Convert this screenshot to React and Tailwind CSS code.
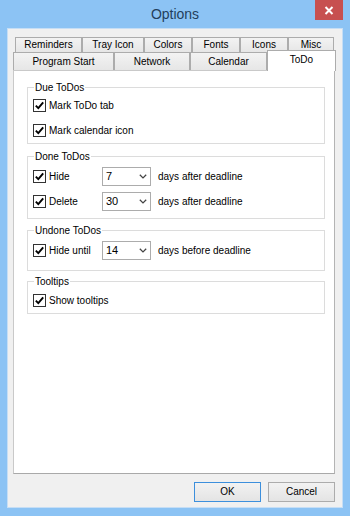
import React from "react";

function Check() {
  return (
    <div className="w-[13px] h-[13px] border border-[#333333] bg-white flex items-center justify-center shrink-0">
      <svg width="11" height="11" viewBox="0 0 11 11">
        <path d="M1.8 5.6 L4.3 8.2 L9.2 2.4" fill="none" stroke="#000" strokeWidth="1.9" />
      </svg>
    </div>
  );
}

function CheckLabel({ label, w }) {
  return (
    <div className={`flex items-center ${w || ""}`}>
      <Check />
      <span className="ml-[3px] leading-[13px]">{label}</span>
    </div>
  );
}

function Combo({ value }) {
  return (
    <div className="w-[49px] h-[19px] border border-[#acacac] bg-white flex items-center justify-between pl-[3px] pr-[3px]">
      <span className="text-[11px] leading-[13px]">{value}</span>
      <svg width="8" height="5" viewBox="0 0 8 5">
        <path d="M0.8 0.8 L4 3.9 L7.2 0.8" fill="none" stroke="#444" strokeWidth="1.3" />
      </svg>
    </div>
  );
}

function Group({ title, h, mt, children }) {
  return (
    <div className={`w-[298px] ${h} ${mt} border border-[#dcdcdc] flex flex-col`}>
      <span className="-mt-[7px] ml-[6px] px-[1px] bg-white w-fit h-[13px] leading-[13px]">{title}</span>
      {children}
    </div>
  );
}

function Tab({ label, w, h }) {
  return (
    <div
      className={`${w} ${h} border-t border-l border-r border-[#acacac] bg-gradient-to-b from-[#f3f3f3] to-[#e6e6e6] flex items-center justify-center leading-[12px]`}
    >
      {label}
    </div>
  );
}

function Button({ label, def }) {
  return (
    <div
      className={`w-[67px] h-[20px] border ${def ? "border-[#3c8fdc]" : "border-[#acacac]"} bg-gradient-to-b from-[#f2f2f2] to-[#e4e4e4] flex items-center justify-center leading-[12px]`}
    >
      {label}
    </div>
  );
}

export default function App() {
  return (
    <div className="w-[350px] h-[516px] bg-[#8cc3f4] flex flex-col font-['Liberation_Sans',Arial,sans-serif] text-[10px] text-black overflow-hidden">
      <div className="h-[28px] grid grid-cols-[1fr_auto_1fr] shrink-0">
        <div />
        <div className="text-[14px] text-[#233f5c] leading-[14px] pt-[7px]">Options</div>
        <div className="flex justify-end pr-[7px]">
          <div className="w-[28px] h-[20px] bg-[#c75050] flex items-center justify-center">
            <svg width="10" height="9" viewBox="0 0 10 9">
              <path d="M1.5 1 L8.5 8 M8.5 1 L1.5 8" stroke="#fff" strokeWidth="2" />
            </svg>
          </div>
        </div>
      </div>

      <div className="mx-[7px] mb-[8px] flex-1 bg-[#f0f0f0] border border-[#c6def5] flex flex-col pt-[8px]">
        <div className="flex pl-[7px]">
          <Tab label="Reminders" w="w-[67px]" h="h-[15px]" />
          <Tab label="Tray Icon" w="w-[62px]" h="h-[15px]" />
          <Tab label="Colors" w="w-[48px]" h="h-[15px]" />
          <Tab label="Fonts" w="w-[48px]" h="h-[15px]" />
          <Tab label="Icons" w="w-[48px]" h="h-[15px]" />
          <Tab label="Misc" w="w-[46px]" h="h-[15px]" />
        </div>
        <div className="flex pl-[5px] h-[18px] items-start">
          <Tab label="Program Start" w="w-[101px]" h="h-[18px]" />
          <Tab label="Network" w="w-[76px]" h="h-[18px]" />
          <Tab label="Calendar" w="w-[77px]" h="h-[18px]" />
          <div className="relative z-10 w-[69px] h-[21px] -mt-[2px] border-t border-l border-r border-[#acacac] bg-white flex items-start justify-center pt-[3px] leading-[12px]">
            ToDo
          </div>
        </div>

        <div className="ml-[5px] w-[322px] h-[404px] bg-white border border-[#c9c9c9] border-r-[#b4b4b4] border-b-[#a9a9a9] flex flex-col pl-[13px]">
          <Group title="Due ToDos" h="h-[57px]" mt="mt-[16px]">
            <div className="mt-[5px] ml-[5px]">
              <CheckLabel label="Mark ToDo tab" />
            </div>
            <div className="mt-[12px] ml-[5px]">
              <CheckLabel label="Mark calendar icon" />
            </div>
          </Group>

          <Group title="Done ToDos" h="h-[63px]" mt="mt-[12px]">
            <div className="mt-[4px] ml-[5px] flex items-center h-[19px]">
              <CheckLabel label="Hide" w="w-[69px]" />
              <Combo value="7" />
              <span className="ml-[7px]">days after deadline</span>
            </div>
            <div className="mt-[6px] ml-[5px] flex items-center h-[19px]">
              <CheckLabel label="Delete" w="w-[69px]" />
              <Combo value="30" />
              <span className="ml-[7px]">days after deadline</span>
            </div>
          </Group>

          <Group title="Undone ToDos" h="h-[41px]" mt="mt-[11px]">
            <div className="mt-[4px] ml-[5px] flex items-center h-[19px]">
              <CheckLabel label="Hide until" w="w-[69px]" />
              <Combo value="14" />
              <span className="ml-[7px]">days before deadline</span>
            </div>
          </Group>

          <Group title="Tooltips" h="h-[33px]" mt="mt-[10px]">
            <div className="mt-[6px] ml-[5px]">
              <CheckLabel label="Show tooltips" />
            </div>
          </Group>
        </div>

        <div className="ml-[5px] w-[322px] mt-[8px] flex justify-end gap-[7px]">
          <Button label="OK" def />
          <Button label="Cancel" />
        </div>
      </div>
    </div>
  );
}
